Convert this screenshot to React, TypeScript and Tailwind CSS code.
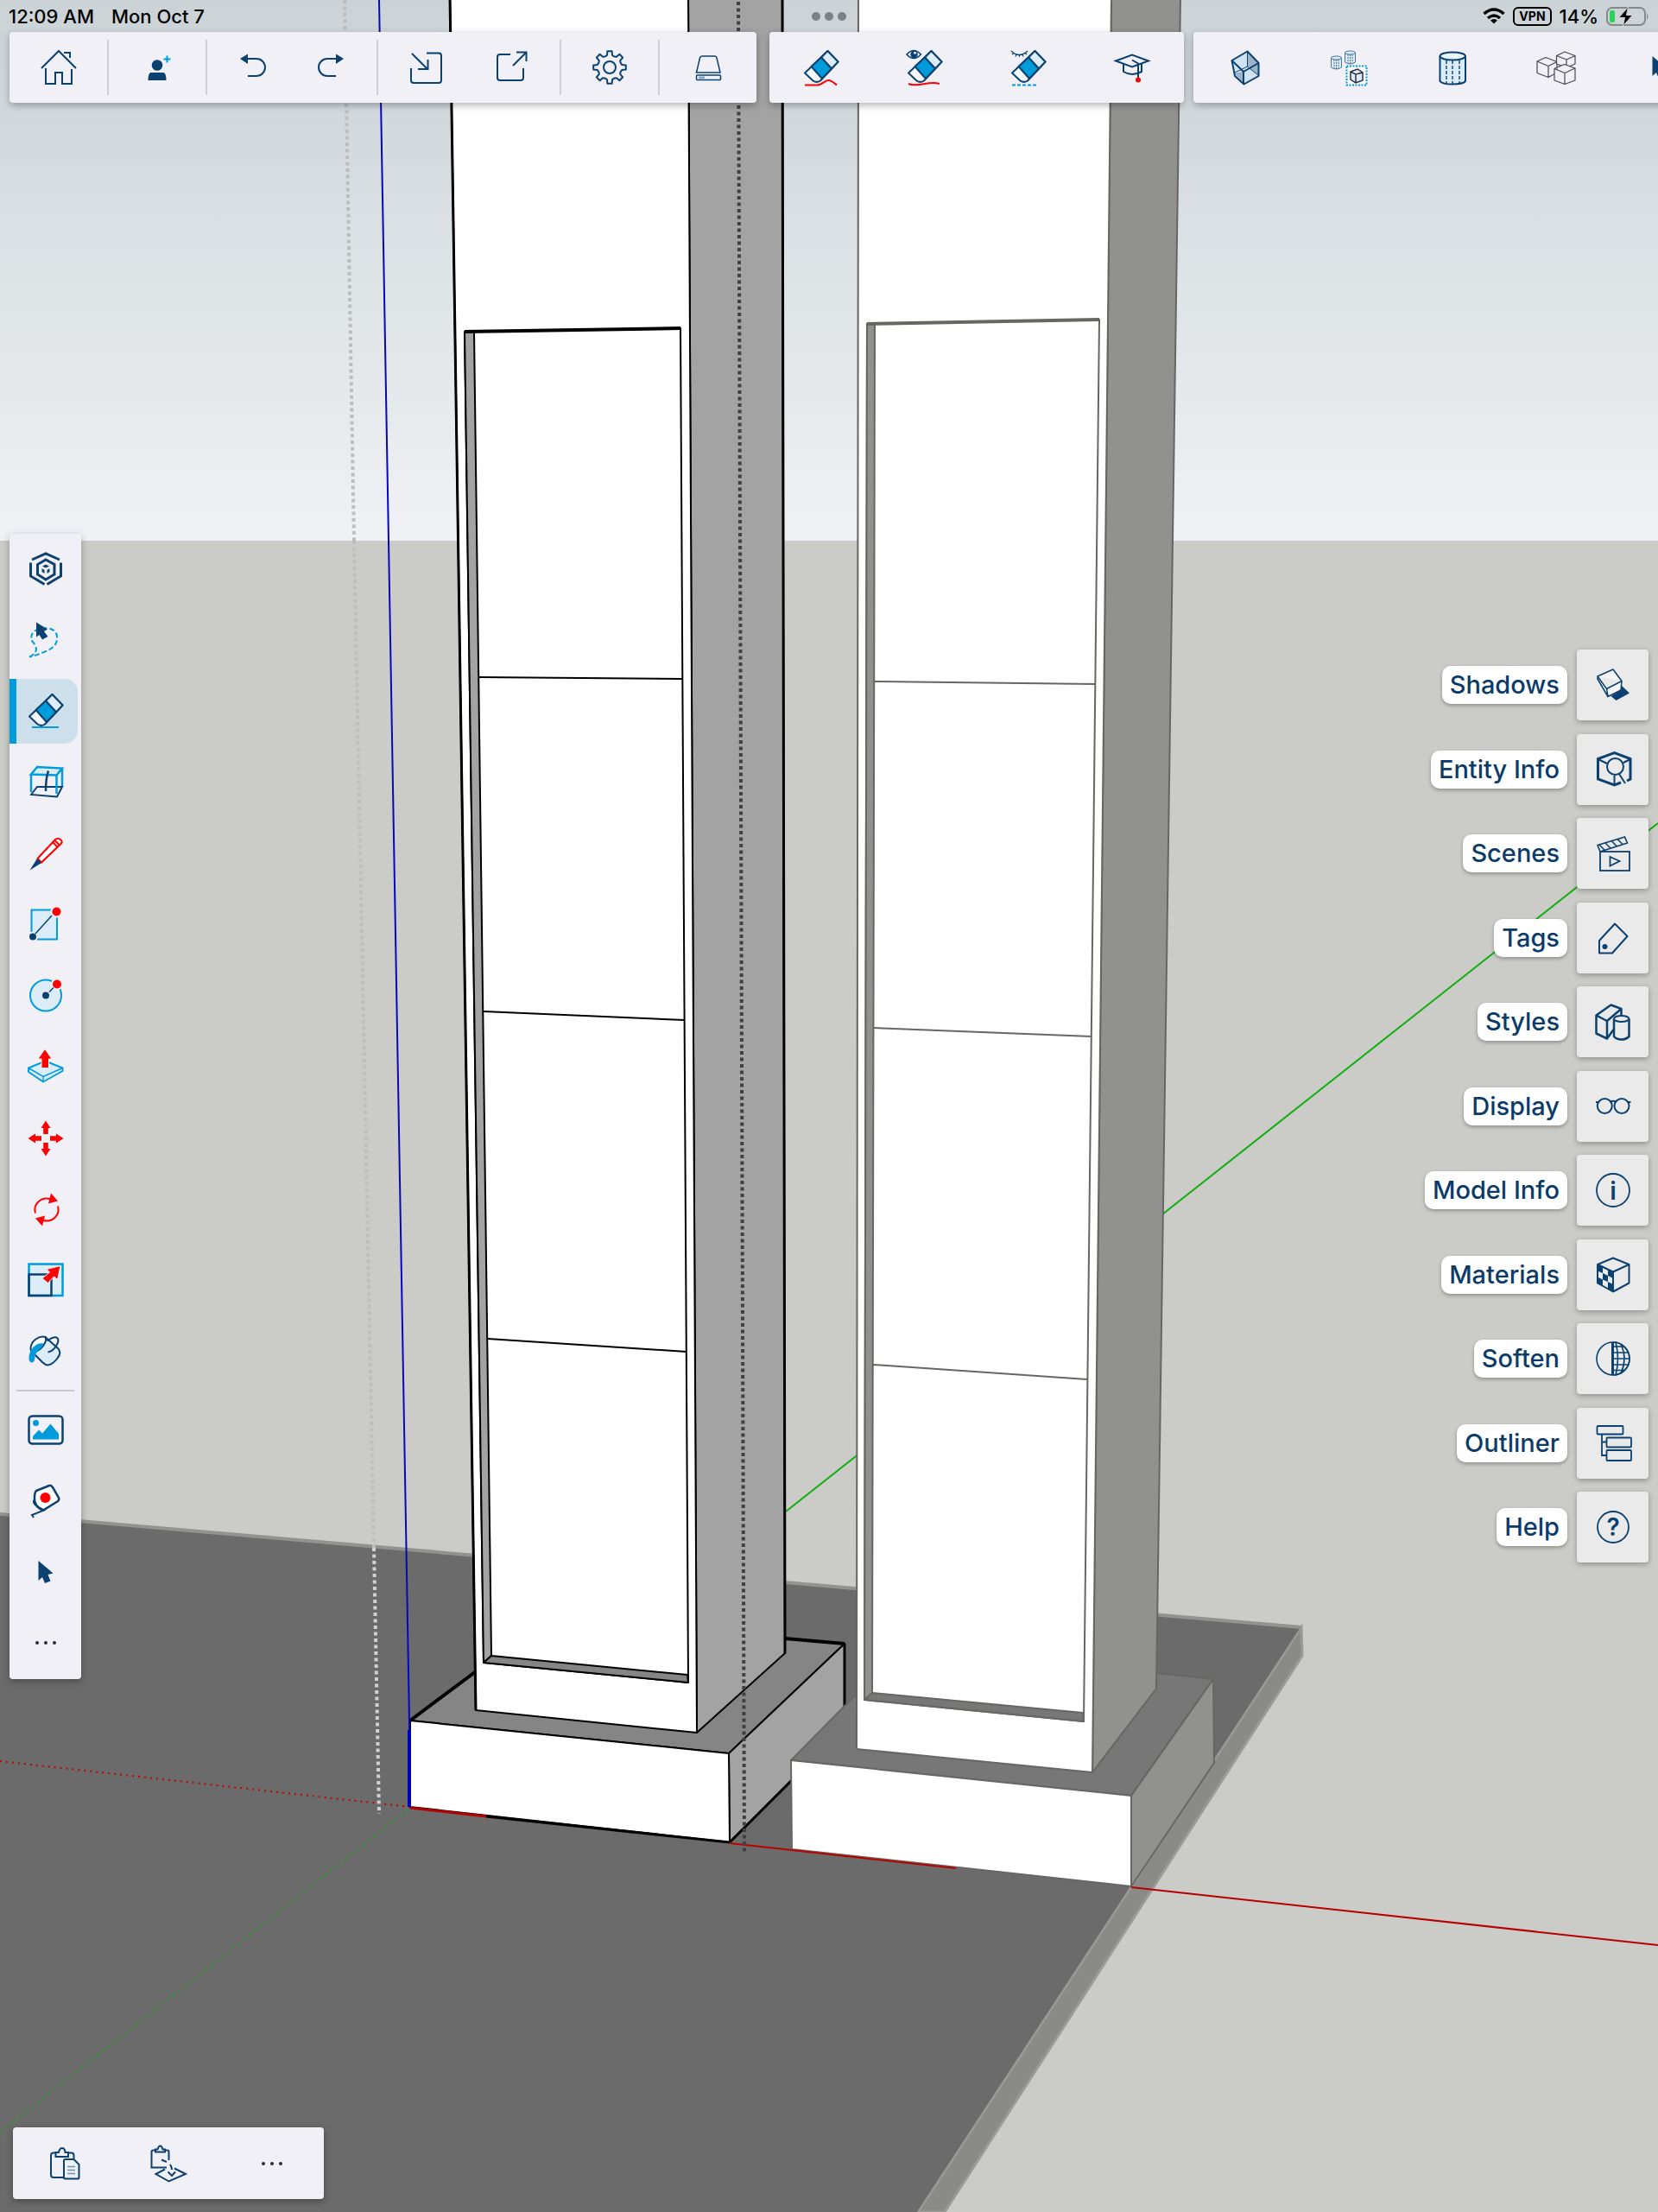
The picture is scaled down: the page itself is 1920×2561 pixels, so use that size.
import type { ReactNode } from "react";
import clsx from "clsx";

const NAVY = "#0b4170";
const BLUE = "#009bdb";
const RED = "#ff0000";
const PALE = "#dcedf9";
const PANEL = "#f1f0f6";

interface IconProps {
  children: ReactNode;
  width?: number;
}

function Icon({ children, width = 2 }: IconProps) {
  return (
    <svg
      viewBox="0 0 48 48"
      className="size-12 shrink-0 overflow-visible"
      fill="none"
      stroke={NAVY}
      strokeWidth={width}
      aria-hidden="true"
    >
      {children}
    </svg>
  );
}

/* ---------- top toolbar icons ---------- */

const HomeIcon = () => (
  <Icon>
    <path d="M4 25 24 5 44 25M30 7H37V13M9 25V43H20V30H28V43H39V26" />
  </Icon>
);

const AddPersonIcon = () => (
  <Icon>
    <circle cx="24" cy="21.5" r="6.3" fill={NAVY} stroke="none" />
    <path d="M13.5 39C13.5 34 14.5 30 17 30H31C33.5 30 34.5 34 34.5 39Z" fill={NAVY} stroke="none" />
    <path d="M35.5 10.5V18.5M31.5 14.5H39.5" stroke={BLUE} />
  </Icon>
);

const UndoIcon = () => (
  <Icon>
    <path d="M9 14 18 8.5V20Z" fill={NAVY} stroke="none" />
    <path d="M17 14H28A10 10 0 0 1 28 34H18" />
  </Icon>
);

const RedoIcon = () => (
  <Icon>
    <path d="M39 14 30 8.5V20Z" fill={NAVY} stroke="none" />
    <path d="M31 14H20A10 10 0 0 0 20 34H30" />
  </Icon>
);

const ImportIcon = () => (
  <Icon>
    <path d="M8 8 26 26M26.5 15V26H15M25 7.5H39Q42 7.5 42 10.5V39Q42 42 39 42H10Q7 42 7 39V25" />
  </Icon>
);

const ExportIcon = () => (
  <Icon>
    <path d="M25 22 40 7M29 6.5H40.5V17M22 9H10Q7 9 7 12V36Q7 39 10 39H34Q37 39 37 36V25" />
  </Icon>
);

const gearPath = (() => {
  const at = (deg: number, r: number) => {
    const a = (deg * Math.PI) / 180;
    return `${(24 + r * Math.sin(a)).toFixed(1)} ${(24 - r * Math.cos(a)).toFixed(1)}`;
  };
  let d = "";
  for (let i = 0; i < 8; i++) {
    const a = i * 45;
    d += `${i === 0 ? "M" : "L"}${at(a - 12, 14.5)}L${at(a - 8, 19)}L${at(a + 8, 19)}L${at(a + 12, 14.5)}`;
    d += `Q${at(a + 22.5, 13)} ${at(a + 33, 14.5)}`;
  }
  return d + "Z";
})();

const GearIcon = () => (
  <Icon>
    <path d={gearPath} strokeLinejoin="round" />
    <circle cx="24" cy="24" r="7" />
  </Icon>
);

const DriveIcon = () => (
  <Icon width={1.5}>
    <path d="M17 11H32Q33.5 11 34 13L38 30H10.5L14.5 13Q15 11 17 11Z" />
    <rect x="10.5" y="33" width="28" height="5.5" rx="1" />
    <path d="M13 35.8H20" stroke="#8aa2bb" strokeWidth="2.5" />
  </Icon>
);

const EraserShape = () => (
  <g strokeLinejoin="round">
    <path d="M31.5 5 43.5 17.5 23 39.5Q18 42.5 14 39L5 30.5Z" fill="#f4f7fc" />
    <path d="M31.5 5 43.5 17.5 36 25.5 24 12.5Z" fill={PALE} />
    <path d="M24 12.5 36 25.5 25 37 12.5 23Z" fill={BLUE} />
  </g>
);

const EraseIcon = () => (
  <Icon>
    <EraserShape />
    <path d="M5 44.5H19C25 44.5 28 39 32 39S39 42 42 44.5" stroke={RED} />
  </Icon>
);

const EraseSoftenIcon = () => (
  <Icon>
    <EraserShape />
    <path d="M3 9Q11 0 19.5 9Q11 18 3 9Z" strokeWidth="1.5" fill={PANEL} />
    <circle cx="11.5" cy="9" r="4.2" fill={NAVY} stroke="none" />
    <circle cx="12.5" cy="7.3" r="1.4" fill="#fff" stroke="none" />
    <path d="M5 43C16 48 28 39 41 43" stroke={RED} />
  </Icon>
);

const EraseHideIcon = () => (
  <Icon>
    <EraserShape />
    <path d="M4 5Q13 14 23 5M5 9 7.5 7M9 11.5 10 9M13.5 12V9.5M18 11.5 17 9M22 9 20 7" strokeWidth="1.2" />
    <path d="M5 44.5H33" stroke={BLUE} strokeDasharray="4 2" />
  </Icon>
);

const LearnIcon = () => (
  <Icon>
    <path d="M5 16.5 24 9.5 43 16.5 24 23.5ZM14 20V29Q24 35 35 29V20M24 15.5 31 19.5V36" />
    <circle cx="31" cy="38.5" r="3" fill={RED} stroke="none" />
  </Icon>
);

const GlassBoxIcon = () => (
  <Icon>
    <path d="M26.5 5.5 39.5 19 39.5 34 22.5 43.5 12 34 8.5 16Z" fill="#cfe3f3" stroke="none" />
    <path d="M26.5 6V23L39 33V19Z" fill="#9fb4c6" stroke="none" />
    <path d="M12 31 22.5 28.5 22.5 43Z" fill="#9fb4c6" stroke="none" />
    <path d="M26.5 6V23L12 30M26.5 23 39 33" strokeWidth="1" />
    <path d="M26.5 5.5 39.5 19V34L22.5 43.5 12 34 8.5 16ZM8.5 16 22 29 39.5 19M22 29V43" strokeLinejoin="round" />
  </Icon>
);

const SmallCylinder = ({ x, y }: { x: number; y: number }) => (
  <g transform={`translate(${x} ${y})`} strokeWidth="1" stroke="#4d7396">
    <path d="M0 2V13Q6 17 12 13V2" fill={PALE} />
    <ellipse cx="6" cy="2" rx="6" ry="2" fill={PALE} />
    <path d="M3.5 4V14M6 4V15M8.5 4V14" strokeDasharray="2 1" />
  </g>
);

const ReplaceComponentIcon = () => (
  <Icon>
    <SmallCylinder x={3.5} y={11} />
    <SmallCylinder x={19.5} y={5} />
    <rect x="21.5" y="22.5" width="23" height="22" stroke={BLUE} strokeDasharray="2 1.5" fill="#fff" />
    <path d="M26 29 34 26 40 30V39L32 42 26 38ZM26 29 32 32 40 30M32 32V42" stroke="#2b2b45" strokeWidth="1.5" fill={PALE} />
  </Icon>
);

const CylinderIcon = () => (
  <Icon>
    <path d="M9.5 11V40Q12 43.5 24 43.5T39 40V11" fill={PALE} />
    <ellipse cx="24.2" cy="11" rx="14.7" ry="4.5" fill="#eaf4fb" />
    <path d="M17 16V43M24 16V43M32 16V43" strokeWidth="1.4" strokeDasharray="4 2" />
  </Icon>
);

const CubesIcon = () => (
  <Icon width={1.2}>
    <g stroke="#4a4458" fill={PANEL} strokeLinejoin="round">
      <path d="M12 12.5 25 17.5V30L15 35.5 2 30.5V17ZM2 17 15 22.5 25 17.5M15 22.5V35" />
      <path d="M34 6 46 10.5V20L36 24.5 24.5 20V10.5ZM24.5 10.5 36 15 46 10.5M36 15V24" />
      <path d="M33.5 20.5 46 25V39L34 43.5 22 39V25.5ZM22 25.5 34 30.5 46 25M34 30.5V43" />
    </g>
  </Icon>
);

const SelectIcon = () => (
  <Icon>
    <path d="M15.5 11 32.5 25.5 26.5 27 29.5 34.5 23 37 20 30 15.5 34Z" fill={NAVY} stroke="none" />
  </Icon>
);

/* ---------- left toolbar icons ---------- */

const HexIcon = () => (
  <Icon width={3}>
    <path d="M8 13 24 6 40 13M6.5 16.5V32L22.5 41.5M41.5 16.5V32L25.5 41.5" />
    <path d="M24 13 34 18.5V30L24 36 14.5 30V18.5Z" />
    <path d="M24 18.5 28 20.5 24 22.5 20 20.5ZM19.5 23 22.5 25V29L19.5 27ZM28.5 23 25.5 25V29L28.5 27Z" fill={NAVY} stroke="none" />
  </Icon>
);

const LassoIcon = () => (
  <Icon>
    <path
      d="M5 43.5Q13 40 13 34Q12 29 8 25C4 14 16 9 27 10.5C40 12 40 28 30 34Q20 40 5 43.5"
      stroke={BLUE}
      strokeDasharray="6 3"
    />
    <path d="M13 3.5 26 11.5 22 14 26.5 20 20 23.5 16.5 18 13 20.5Z" fill={NAVY} stroke="none" />
  </Icon>
);

const EraserToolIcon = () => (
  <Icon>
    <EraserShape />
    <path d="M8 43H39" stroke={BLUE} />
  </Icon>
);

const SectionIcon = () => (
  <Icon>
    <path d="M7 39 14 30H43L37 41.5Z" />
    <path d="M7 15.5 14 7 43 8.5 36.5 16.5Z" fill={PALE} stroke={BLUE} strokeWidth="2.5" />
    <path d="M7 15V36M43 8.5V29M36.5 16V38" stroke={BLUE} strokeWidth="2.5" />
    <path d="M27 11.5Q24 20 24 35" strokeWidth="2.5" />
  </Icon>
);

const PencilIcon = () => (
  <Icon>
    <path d="M14.5 30 35 8Q38.5 5 42 9Q43.5 11 41.5 13L19 34.5ZM32 11 38 17M34.5 9 40 14.5" stroke={RED} fill="#fff" />
    <path d="M5.5 43.5 14 30 19 35Z" fill={NAVY} stroke="none" />
  </Icon>
);

const RectangleIcon = () => (
  <Icon>
    <rect x="7.5" y="7.5" width="29.5" height="34" fill={PALE} stroke={BLUE} />
    <circle cx="36.5" cy="9.5" r="7" fill={PANEL} stroke="none" />
    <circle cx="9" cy="38.5" r="6" fill={PANEL} stroke="none" />
    <path d="M12 35 31 14" strokeWidth="1.5" />
    <circle cx="36.5" cy="9.5" r="5" fill={RED} stroke="none" />
    <circle cx="9" cy="38.5" r="4" fill={NAVY} stroke="none" />
  </Icon>
);

const CircleIcon = () => (
  <Icon>
    <circle cx="24" cy="24.5" r="18" fill={PALE} stroke={BLUE} />
    <circle cx="37" cy="11.5" r="7" fill={PANEL} stroke="none" />
    <path d="M28 20.5 33 15.5" strokeWidth="1.5" />
    <circle cx="37" cy="11.5" r="5" fill={RED} stroke="none" />
    <circle cx="24" cy="24.5" r="4" fill={NAVY} stroke="none" />
  </Icon>
);

const PushPullIcon = () => (
  <Icon>
    <g transform="translate(-0.5 1.5)">
      <path d="M4.5 25 24 17 44 25V28.5L21.5 41 4.5 29.5Z" fill={PALE} stroke={BLUE} strokeLinejoin="round" />
      <path d="M4.5 25 21.5 35 44 25M21.5 35V41" stroke={BLUE} strokeWidth="1.5" />
      <path d="M23.5 3 31.5 14.5H28V25H19.5V14.5H15.5Z" fill={RED} stroke={PANEL} strokeWidth="1" />
    </g>
  </Icon>
);

const MoveIcon = () => (
  <Icon>
    {[0, 90, 180, 270].map((deg) => (
      <path
        key={deg}
        d="M24 4.5 29.5 13H26.8V20H21.2V13H18.5Z"
        transform={`rotate(${deg} 24 25)`}
        fill={RED}
        stroke="none"
      />
    ))}
  </Icon>
);

const RotateIcon = () => (
  <Icon>
    {[0, 180].map((deg) => (
      <g key={deg} transform={`translate(0 1.5) rotate(${deg} 25 24)`}>
        <path d="M12 28C9 18 18 9 29 11.5" stroke={RED} />
        <path d="M30 5 38 14 27 17Z" fill={RED} stroke="none" />
      </g>
    ))}
  </Icon>
);

const ScaleIcon = () => (
  <Icon width={2.5}>
    <rect x="4.5" y="6.5" width="39" height="36.5" fill={PALE} stroke={BLUE} />
    <rect x="4.5" y="18.5" width="26" height="24.5" />
    <path d="M41 8.5 37.5 24.5 33.5 21 26.5 28.5 20 23 28.5 16 25 12.5Z" fill={RED} stroke={PANEL} strokeWidth="1" />
  </Icon>
);

const PaintIcon = () => (
  <Icon>
    <g transform="translate(-0.5 0.5)">
      <path d="M24 8.5 39 22Q43 27 38 33Q33 40 27 41Q24 41 21 38L11 28Z" fill={PALE} />
      <path d="M24 8.5C16 6 7 14 7 22C7 30 18 24 22 18Q26 12 24 8.5Z" fill="#fff" />
      <path d="M22 16C14 14 5 22 5 33Q5 38 9 38Q12 37 12 31C13 24 20 23 22 16Z" fill={BLUE} stroke="none" />
      <path d="M26 13Q33 8 37 9Q41 11 37 18Q33 25 27 26" />
    </g>
  </Icon>
);

const ImageIcon = () => (
  <Icon width={2.5}>
    <rect x="4.5" y="7.5" width="39" height="32" rx="4" />
    <circle cx="12.5" cy="15.5" r="3.5" fill={BLUE} stroke="none" />
    <path d="M9 34.5V31L16 23.5 20 27.5 29.5 16.5 39 28V34.5Z" fill={BLUE} stroke="none" />
  </Icon>
);

const TapeIcon = () => (
  <Icon>
    <path d="M13 12 28 6Q30 5 32 8L39 20Q40 22 38 24L21 34.5Q10 30 11 20Q11 14 13 12Z" fill="#fff" strokeWidth="2.5" />
    <path d="M10 23Q9 28 17 32L22 34.5 8 40 10 43" />
    <circle cx="23.5" cy="20" r="6" fill={RED} stroke="none" />
  </Icon>
);

const MoreIcon = () => (
  <Icon>
    {[14, 24, 34].map((cx) => (
      <circle key={cx} cx={cx} cy="24" r="2" fill="#2b2b45" stroke="none" />
    ))}
  </Icon>
);

/* ---------- right panel icons ---------- */

const ShadowsIcon = () => (
  <Icon width={1.5}>
    <path d="M33 24 43 33.5 27.5 42 21.5 37 33 30Z" fill={NAVY} stroke="none" />
    <path d="M6 14 24 6 34 19.5 33 30 18 37.5 6 17ZM6 14 16.5 28.5 34 19.5M16.5 28.5 18 37" fill="#f6f6f6" strokeLinejoin="round" />
  </Icon>
);

const EntityInfoIcon = () => (
  <Icon>
    <path d="M40 37 44 35V11.5L25.5 4.5 6.5 11.5V35L25.5 42 33 39" strokeWidth="3" />
    <path d="M6.5 12 17 17M44 12 36 16M25.5 42V31M31 29 38 40" />
    <circle cx="26.5" cy="20.5" r="9.5" fill="#eaeaea" />
  </Icon>
);

const ScenesIcon = () => (
  <Icon>
    <path d="M6 14.5 37.5 5 40.5 12 9 22ZM8 14 14 20M15 12 21 18M22 9.5 28 15.5M29 7.5 35 13.5" strokeWidth="1.6" />
    <rect x="9" y="22" width="34" height="22" strokeWidth="1.8" />
    <path d="M20.5 28 31.5 33 20.5 38.5Z" strokeWidth="1.8" />
  </Icon>
);

const TagsIcon = () => (
  <Icon>
    <path d="M26 7.5 40.5 22 23 41.5H8V27Z" strokeLinejoin="round" />
    <circle cx="14.5" cy="34" r="3" fill={NAVY} stroke="none" />
  </Icon>
);

const StylesIcon = () => (
  <Icon>
    <path d="M17 43.5 4.5 37.5V16.5L21.5 4.5 33.5 9V17M4.5 16.5 17 23 33.5 9M17 23V43.5L24.5 33" strokeWidth="2.5" strokeLinejoin="round" />
    <path d="M25 20.5V41Q28 44.5 33.5 44.5T42.5 41V20.5" fill="#eaeaea" strokeWidth="2.5" />
    <ellipse cx="33.7" cy="20.5" rx="8.7" ry="3.5" fill="#eaeaea" />
  </Icon>
);

const DisplayIcon = () => (
  <Icon>
    <circle cx="14.3" cy="23.5" r="8.5" />
    <circle cx="34" cy="23.5" r="8.5" />
    <path d="M4 19H7.5M41 19H44.5M20 18.5Q24 17 28 18.5" />
  </Icon>
);

const GlyphInCircle = ({ glyph, size, y, r }: { glyph: string; size: number; y: number; r: number }) => (
  <Icon>
    <circle cx="24" cy="24" r={r} strokeWidth="1.8" />
    <text
      x="24"
      y={y}
      textAnchor="middle"
      fontSize={size}
      fontWeight="600"
      fontFamily="Inter, sans-serif"
      fill={NAVY}
      stroke="none"
    >
      {glyph}
    </text>
  </Icon>
);

const ModelInfoIcon = () => <GlyphInCircle glyph="i" size={29} y={35} r={19} />;
const HelpIcon = () => <GlyphInCircle glyph="?" size={28} y={34} r={18} />;

const MaterialsIcon = () => (
  <Icon>
    <path
      d="M6 12 12 15V22L6 19.5ZM18 17.5 24 20.5V28L18 25ZM12 22 18 25V32L12 29.5ZM6 26.5 12 29.5V36.5L6 33.5ZM18 32 24 35V43L18 40Z"
      fill={NAVY}
      stroke="none"
    />
    <path d="M24 4.5 42.5 12V33.5L24 43.5 6 33.5V12ZM6 12 24 20.5 42.5 12M24 20.5V43.5" strokeLinejoin="round" />
  </Icon>
);

const SoftenIcon = () => (
  <Icon width={1.6}>
    <circle cx="24" cy="24" r="19" />
    <path d="M24 5A19 19 0 0 1 24 43M24 10H36M24 17H41M24 24H43M24 31H41M24 37.5H37" />
    <path d="M27 5Q32 24 27 43M33 7Q41 24 33 41" />
    <path d="M23.5 5V43" strokeWidth="3" />
  </Icon>
);

const OutlinerIcon = () => (
  <Icon width={1.8}>
    <rect x="5.5" y="4" width="30" height="9.5" rx="1" />
    <rect x="16.5" y="17.5" width="28.5" height="11" rx="1" />
    <rect x="16.5" y="32" width="28.5" height="12" rx="1" />
    <path d="M11 13.5V38H16.5M11 22.5H16.5" />
  </Icon>
);

/* ---------- bottom bar icons ---------- */

const PasteIcon = () => (
  <Icon>
    <path d="M13 11.5H11Q8 11.5 8 14.5V37Q8 40 11 40H23M28 11.5H31.5Q34.5 11.5 34.5 14.5V18" />
    <path d="M13.5 16V11H17Q18 6 21 6T24.5 11H28V16Z" />
    <path d="M24.5 19H34.5L40.5 25V40Q40.5 41.5 39 41.5H24.5Q23 41.5 23 40V20.5Q23 19 24.5 19Z" />
    <path d="M27 27.5H36M27 31.5H36M27 35.5H36" stroke="#6f8fae" strokeWidth="1.5" />
  </Icon>
);

const PasteInPlaceIcon = () => (
  <Icon>
    <path d="M9 8.5H6.5Q4.5 8.5 4.5 10.5V28.5H22M20 8.5H22.5Q24.5 8.5 24.5 10.5V20" />
    <path d="M9 10.5V7.5H11.5Q12.5 3.5 14.5 3.5T17.5 7.5H20V10.5Z" />
    <path d="M20 30.5 9.5 36 24.5 44.5 44 36 31 29.5" />
    <path d="M16 19.5 22 22M26 25Q28 28 28 31M23.5 33.5 28 38 32 33.5" />
  </Icon>
);

/* ---------- modelling canvas ---------- */

function ModelView() {
  return (
    <svg
      viewBox="0 0 1920 2561"
      preserveAspectRatio="xMidYMid slice"
      className="absolute inset-0 size-full"
      role="img"
      aria-label="3D model of two columns"
    >
      <defs>
        <linearGradient id="sky" x1="0" y1="0" x2="0" y2="1">
          <stop offset="0" stopColor="#ccd3d6" />
          <stop offset="0.2" stopColor="#d1d8db" />
          <stop offset="0.54" stopColor="#dfe4e7" />
          <stop offset="1" stopColor="#f0f1f4" />
        </linearGradient>
      </defs>
      <rect width="1920" height="627" fill="url(#sky)" />
      <rect y="626" width="1920" height="1935" fill="#cbccc7" />

      {/* ground slab */}
      <path d="M1507 1884 1508 1917 1094 2561H1063Z" fill="#8a8a87" stroke="#9a9b97" strokeWidth="3" />
      <path d="M0 1753 1507 1884 1063 2561H0Z" fill="#6b6b6b" />
      <path d="M0 1753 1507 1884" stroke="#92938f" strokeWidth="4" />
      <path d="M1507 1884 1063 2561" stroke="#9a9b97" strokeWidth="2" />

      {/* axes behind the columns */}
      <path d="M910 1750 1920 953" stroke="#0fae0f" strokeWidth="2" />
      <path d="M0 2469 475 2093" stroke="#12b012" strokeWidth="2" strokeDasharray="2 6" />
      <path d="M0 2039 475 2092" stroke="#c00000" strokeWidth="2" strokeDasharray="2 5" />

      {/* left column */}
      <g stroke="#000" strokeWidth="2" strokeLinejoin="round">
        <path d="M475 1992 550 1936 909 1897 978 1903 844 2030Z" fill="#858585" />
        <path d="M550 1936 475 1992M909 1897 978 1903" strokeWidth="4" />
        <path d="M844 2030 978 1903V2000L845 2133Z" fill="#a3a3a3" />
        <path d="M978 1903V2000M845 2133 978 2000" strokeWidth="3" />
        <path d="M475 1992 844 2030 845 2133 475 2092Z" fill="#fff" />
        <path d="M797 -5H906L909 1914 807 2006Z" fill="#a3a3a3" />
        <path d="M521 -5H797L807 2006 551 1980Z" fill="#fff" />
        <path d="M521 -5 551 1980M906 -5 909 1914" strokeWidth="3" />
        <path d="M538 384 788 380 797 1948 560 1925Z" fill="#fff" />
        <path d="M538 384H549L569 1917 560 1925Z" fill="#a3a3a3" />
        <path d="M560 1925 569 1917 796 1939 797 1948Z" fill="#858585" />
        <path d="M538 384 788 380" strokeWidth="4" />
        <path d="M554 784 790 786M560 1171 793 1181M565 1550 795 1565" />
      </g>

      {/* right column */}
      <g stroke="#666663" strokeWidth="2" strokeLinejoin="round">
        <path d="M916 2038 990 1963 1340 1937 1405 1944 1310 2079Z" fill="#777" />
        <path d="M1310 2079 1405 1944 1406 2041 1310 2184Z" fill="#91918f" />
        <path d="M916 2038 1310 2079V2184L917 2141Z" fill="#fff" />
        <path d="M1287 -5H1367L1339 1955 1265 2052Z" fill="#91918f" />
        <path d="M994 -5H1287L1265 2052 992 2025Z" fill="#fff" />
        <path d="M1004 375 1273 370 1255 1993 1001 1968Z" fill="#fff" />
        <path d="M1004 375H1013L1010 1960 1001 1968Z" fill="#91918f" />
        <path d="M1001 1968 1010 1960 1254 1983 1255 1993Z" fill="#777" />
        <path d="M1004 375 1273 370" strokeWidth="4" />
        <path d="M1012 789 1268 792M1012 1190 1264 1200M1011 1580 1259 1597" />
      </g>

      {/* axes and guides in front */}
      <path d="M439 0 474 1992V2092" fill="none" stroke="#0808b8" strokeWidth="2" />
      <path d="M474 2003V2092" stroke="#0000b8" strokeWidth="4" />
      <path d="M475 2093 563 2103" stroke="#b80000" strokeWidth="3" />
      <path d="M563 2103 845 2133" stroke="#000" strokeWidth="3" />
      <path d="M845 2134 1107 2163M1310 2185 1920 2252" stroke="#b80000" strokeWidth="2" />
      <path d="M399 0 410 626" stroke="#bdbebc" strokeWidth="4" strokeDasharray="4 3.5" />
      <path d="M410 626 433 1792" stroke="#bebfbb" strokeWidth="4" strokeDasharray="4 3.5" />
      <path d="M433 1792 439 2100" stroke="#d2d2d2" strokeWidth="4" strokeDasharray="4 3.5" />
      <path d="M855 2 862 2145" stroke="#404040" strokeWidth="4" strokeDasharray="4 3.5" />
    </svg>
  );
}

/* ---------- chrome ---------- */

function StatusBar() {
  return (
    <div className="grid h-[37px] grid-cols-3 items-center px-[10px] text-[22px] leading-6 font-medium text-black">
      <div className="flex gap-5">
        <span>12:09 AM</span>
        <span>Mon Oct 7</span>
      </div>
      <div className="flex justify-center gap-[5px]">
        <span className="size-[10px] rounded-full bg-[#7b8184]" />
        <span className="size-[10px] rounded-full bg-[#7b8184]" />
        <span className="size-[10px] rounded-full bg-[#7b8184]" />
      </div>
      <div className="flex items-center justify-end gap-[9px]">
        <svg viewBox="0 0 26 19" className="h-[19px] w-[26px]" fill="none" stroke="#000" strokeWidth="3.6" aria-label="Wi-Fi">
          <path d="M1.5 7Q13 -3 24.5 7M6 12Q13 6 20 12" />
          <path d="M13 18.5 9 14.5Q13 11.5 17 14.5Z" fill="#000" stroke="none" />
        </svg>
        <span className="flex h-[22px] items-center rounded-md border-2 border-black px-[5px] text-[14px] leading-4 font-bold">
          VPN
        </span>
        <span>14%</span>
        <svg viewBox="0 0 50 24" className="h-6 w-[50px]" aria-label="Battery charging">
          <rect x="1" y="2" width="44" height="20" rx="6" fill="none" stroke="#84898b" strokeWidth="2" />
          <path d="M47 8.5Q50 12 47 16Z" fill="#84898b" />
          <rect x="4" y="5" width="6" height="14" rx="2" fill="#30d158" />
          <path d="M25.5 1 14.5 13.5H21.5L19.5 23 30.5 10.5H23.5Z" fill="#000" stroke="#cfd5d8" strokeWidth="1" />
        </svg>
      </div>
    </div>
  );
}

interface Tool {
  name: string;
  icon: () => ReactNode;
  active?: boolean;
}

interface ToolButtonProps {
  tool: Tool;
  className: string;
}

function ToolButton({ tool, className }: ToolButtonProps) {
  return (
    <button type="button" aria-label={tool.name} className={clsx("flex shrink-0 items-center justify-center", className)}>
      <tool.icon />
    </button>
  );
}

const panel = "rounded-[4px] bg-[#f1f0f6] shadow-[0_3px_8px_rgba(0,0,0,0.3)]";

const fileGroups: { width: string; tools: Tool[] }[] = [
  { width: "w-[113px]", tools: [{ name: "Home", icon: HomeIcon }] },
  { width: "w-[114px]", tools: [{ name: "Add collaborator", icon: AddPersonIcon }] },
  {
    width: "w-[198px]",
    tools: [
      { name: "Undo", icon: UndoIcon },
      { name: "Redo", icon: RedoIcon },
    ],
  },
  {
    width: "w-[212px]",
    tools: [
      { name: "Import", icon: ImportIcon },
      { name: "Export", icon: ExportIcon },
    ],
  },
  { width: "w-[114px]", tools: [{ name: "Settings", icon: GearIcon }] },
  { width: "w-[114px]", tools: [{ name: "Storage", icon: DriveIcon }] },
];

const eraserTools: Tool[] = [
  { name: "Erase", icon: EraseIcon },
  { name: "Soften edges", icon: EraseSoftenIcon },
  { name: "Hide edges", icon: EraseHideIcon },
  { name: "Learn", icon: LearnIcon },
];

const modelTools: Tool[] = [
  { name: "X-ray", icon: GlassBoxIcon },
  { name: "Replace component", icon: ReplaceComponentIcon },
  { name: "Hidden geometry", icon: CylinderIcon },
  { name: "Components", icon: CubesIcon },
  { name: "Select", icon: SelectIcon },
];

const drawTools: Tool[] = [
  { name: "All tools", icon: HexIcon },
  { name: "Lasso", icon: LassoIcon },
  { name: "Eraser", icon: EraserToolIcon, active: true },
  { name: "Section", icon: SectionIcon },
  { name: "Line", icon: PencilIcon },
  { name: "Rectangle", icon: RectangleIcon },
  { name: "Circle", icon: CircleIcon },
  { name: "Push/Pull", icon: PushPullIcon },
  { name: "Move", icon: MoveIcon },
  { name: "Rotate", icon: RotateIcon },
  { name: "Scale", icon: ScaleIcon },
  { name: "Paint", icon: PaintIcon },
];

const extraTools: Tool[] = [
  { name: "Add image", icon: ImageIcon },
  { name: "Tape measure", icon: TapeIcon },
  { name: "Select", icon: SelectIcon },
  { name: "More tools", icon: MoreIcon },
];

const panels: Tool[] = [
  { name: "Shadows", icon: ShadowsIcon },
  { name: "Entity Info", icon: EntityInfoIcon },
  { name: "Scenes", icon: ScenesIcon },
  { name: "Tags", icon: TagsIcon },
  { name: "Styles", icon: StylesIcon },
  { name: "Display", icon: DisplayIcon },
  { name: "Model Info", icon: ModelInfoIcon },
  { name: "Materials", icon: MaterialsIcon },
  { name: "Soften", icon: SoftenIcon },
  { name: "Outliner", icon: OutlinerIcon },
  { name: "Help", icon: HelpIcon },
];

const editTools: Tool[] = [
  { name: "Paste", icon: PasteIcon },
  { name: "Paste in place", icon: PasteInPlaceIcon },
  { name: "More", icon: MoreIcon },
];

function TopToolbars() {
  return (
    <header className="flex h-[82px] overflow-x-clip pl-[11px]">
      <div className={clsx("flex shrink-0 items-center", panel)}>
        {fileGroups.map((group, i) => (
          <div
            key={i}
            className={clsx("flex h-16 justify-center", group.width, i > 0 && "border-l-2 border-[#cfced4]")}
          >
            {group.tools.map((tool) => (
              <ToolButton
                key={tool.name}
                tool={tool}
                className={group.width === "w-[212px]" ? "w-[100px]" : "w-[90px]"}
              />
            ))}
          </div>
        ))}
      </div>
      <div className={clsx("ml-[15px] flex shrink-0", panel)}>
        {eraserTools.map((tool) => (
          <ToolButton key={tool.name} tool={tool} className="w-[120px]" />
        ))}
      </div>
      <div className={clsx("ml-[11px] flex shrink-0", panel)}>
        {modelTools.map((tool) => (
          <ToolButton key={tool.name} tool={tool} className="w-[120px]" />
        ))}
      </div>
    </header>
  );
}

function DrawToolbar() {
  const renderTool = (tool: Tool) => (
    <div key={tool.name} className="flex flex-1 items-center">
      <ToolButton
        tool={tool}
        className={
          tool.active
            ? "h-[75px] w-[79px] rounded-r-[15px] border-l-8 border-[#009bdb] bg-[#cddfea] pr-1"
            : "h-[75px] w-full"
        }
      />
    </div>
  );

  return (
    <nav aria-label="Drawing tools" className={clsx("flex h-[1326px] w-[83px] flex-col", panel)}>
      <div className="flex grow-[12] basis-0 flex-col">{drawTools.map(renderTool)}</div>
      <hr className="mx-2 my-1 border-t-2 border-[#c9c8cf]" />
      <div className="flex grow-[4] basis-0 flex-col">{extraTools.map(renderTool)}</div>
    </nav>
  );
}

function PanelList() {
  return (
    <nav aria-label="Panels" className="flex h-[1057px] flex-col items-end justify-between">
      {panels.map((item) => (
        <button key={item.name} type="button" className="flex items-center gap-[11px]">
          <span className="rounded-[10px] bg-white px-[9px] py-[6px] text-[29px] leading-8 font-medium text-[#0b3b69] shadow-[0_2px_4px_rgba(0,0,0,0.3)]">
            {item.name}
          </span>
          <span className="flex h-[82px] w-[83px] items-center justify-center rounded-[4px] bg-[#eaeaea] shadow-[0_2px_6px_rgba(0,0,0,0.3)]">
            <item.icon />
          </span>
        </button>
      ))}
    </nav>
  );
}

export default function App() {
  return (
    <div className="relative min-h-screen overflow-hidden font-['Inter',sans-serif]">
      <ModelView />
      <div className="relative flex min-h-screen flex-col">
        <StatusBar />
        <TopToolbars />
        <main className="flex flex-1 items-center justify-between px-[11px] pb-[21px]">
          <DrawToolbar />
          <PanelList />
        </main>
        <footer className="flex pb-[15px] pl-[15px]">
          <div className={clsx("flex h-[83px]", panel)}>
            {editTools.map((tool) => (
              <ToolButton key={tool.name} tool={tool} className="w-[120px]" />
            ))}
          </div>
        </footer>
      </div>
    </div>
  );
}
